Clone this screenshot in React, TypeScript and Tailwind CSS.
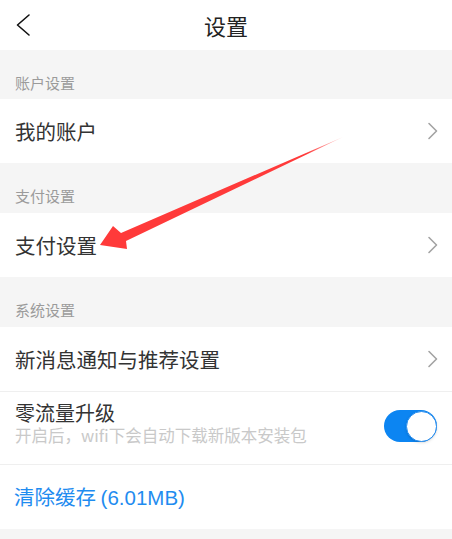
import React from "react";

const Chevron = () => (
  <svg width="12" height="18" viewBox="0 0 12 18" fill="none">
    <path d="M2 1.5 L9.5 9 L2 16.5" stroke="#a3a3a3" strokeWidth="1.6" strokeLinecap="round" strokeLinejoin="round" />
  </svg>
);

const Section = ({ label, h }: { label: string; h: string }) => (
  <div className={`bg-[#f5f5f5] ${h} pt-[23px] px-[15px]`}>
    <div className="text-[15px] leading-[20px] text-[#9b9b9b]">{label}</div>
  </div>
);

const Row = ({ label }: { label: string }) => (
  <div className="h-[64px] bg-white flex items-center justify-between pl-[15px] pr-[13px]">
    <span className="text-[20.5px] leading-[26px] text-[#333333]">{label}</span>
    <Chevron />
  </div>
);

export default function App() {
  return (
    <div className="relative w-[452px] h-[539px] overflow-hidden bg-[#f5f5f5] font-['Noto_Sans_CJK_SC','Noto_Sans',sans-serif]">
      <div className="h-[50px] bg-white grid grid-cols-[1fr_auto_1fr] items-center">
        <div className="pl-[15px] flex items-center">
          <svg width="16" height="24" viewBox="0 0 16 24" fill="none">
            <path d="M14 2 L2.5 12 L14 22" stroke="#111111" strokeWidth="1.6" strokeLinecap="round" strokeLinejoin="round" />
          </svg>
        </div>
        <div className="text-[22px] leading-[28px] text-[#222222]">设置</div>
        <div />
      </div>

      <Section label="账户设置" h="h-[49px]" />
      <Row label="我的账户" />
      <Section label="支付设置" h="h-[50px]" />
      <Row label="支付设置" />
      <Section label="系统设置" h="h-[50px]" />
      <Row label="新消息通知与推荐设置" />
      <div className="h-px bg-[#efefef]" />
      <div className="h-[72px] bg-white flex justify-between pl-[15px] pr-[15px]">
        <div className="pt-[9px] flex flex-col">
          <div className="text-[20px] leading-[24px] text-[#333333]">零流量升级</div>
          <div className="text-[16.5px] leading-[20px] text-[#c9c9c9]">开启后，wifi下会自动下载新版本安装包</div>
        </div>
        <div className="flex items-center mb-[4px]">
          <div className="w-[53px] h-[32px] rounded-full bg-[#0c85f2] flex items-center justify-end">
            <div className="w-[31px] h-[31px] rounded-full bg-white border border-[#2a8ff0] shadow-sm" />
          </div>
        </div>
      </div>
      <div className="h-px bg-[#efefef]" />
      <div className="h-[64px] bg-white flex items-center px-[14px]">
        <span className="text-[20.5px] leading-[26px] text-[#1f8cf0]">
          清除缓存 <span className="font-['Liberation_Sans',sans-serif]">(6.01MB)</span>
        </span>
      </div>

      <svg className="absolute inset-0 pointer-events-none" width="452" height="539" viewBox="0 0 452 539">
        <defs>
          <linearGradient id="fade" x1="343" y1="137" x2="100" y2="245" gradientUnits="userSpaceOnUse">
            <stop offset="0" stopColor="#ff3a3a" stopOpacity="0.2" />
            <stop offset="0.15" stopColor="#ff3a3a" stopOpacity="1" />
            <stop offset="1" stopColor="#ff3a3a" stopOpacity="1" />
          </linearGradient>
        </defs>
        <polygon
          points="343,137 121,233 113,226 100,245 127,249 126,241"
          fill="url(#fade)"
        />
      </svg>
    </div>
  );
}
